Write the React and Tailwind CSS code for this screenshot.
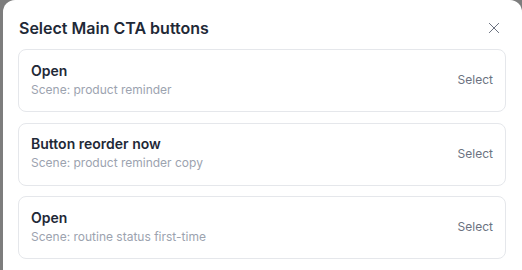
import React from "react";

const items = [
  { title: "Open", scene: "Scene: product reminder" },
  { title: "Button reorder now", scene: "Scene: product reminder copy" },
  { title: "Open", scene: "Scene: routine status first-time" },
];

export default function App() {
  return (
    <div className="w-[522px] h-[270px] overflow-hidden bg-[#7d7d7d]">
      <div className="ml-[3px] w-[519px] h-[290px] bg-white rounded-xl pl-[15px] pr-4 pt-4 font-['Inter',sans-serif]">
        <div className="flex items-center justify-between h-6 pl-[1px]">
          <h2 className="text-[16px] font-semibold text-[#1f2937] tracking-[0px]">Select Main CTA buttons</h2>
          <button className="mr-[4px] text-[#6b7280]">
            <svg width="16" height="16" viewBox="0 0 24 24" fill="none" stroke="currentColor" strokeWidth="1.5" strokeLinecap="round">
              <path d="M5 5l14 14M19 5L5 19" />
            </svg>
          </button>
        </div>
        <div className="mt-[9px] flex flex-col gap-[10.5px]">
          {items.map((it, i) => (
            <div key={i} className="h-[63px] border border-[#e5e7eb] rounded-lg pl-[12px] pr-[12px] pb-[2px] flex items-center justify-between">
              <div className="flex flex-col">
                <div className="text-[14px] leading-[20px] font-semibold text-[#1f2937]">{it.title}</div>
                <div className="text-[12px] leading-[18px] text-[#9ca3af]">{it.scene}</div>
              </div>
              <div className="text-[12px] text-[#6b7280] pt-[1px]">Select</div>
            </div>
          ))}
        </div>
      </div>
    </div>
  );
}
